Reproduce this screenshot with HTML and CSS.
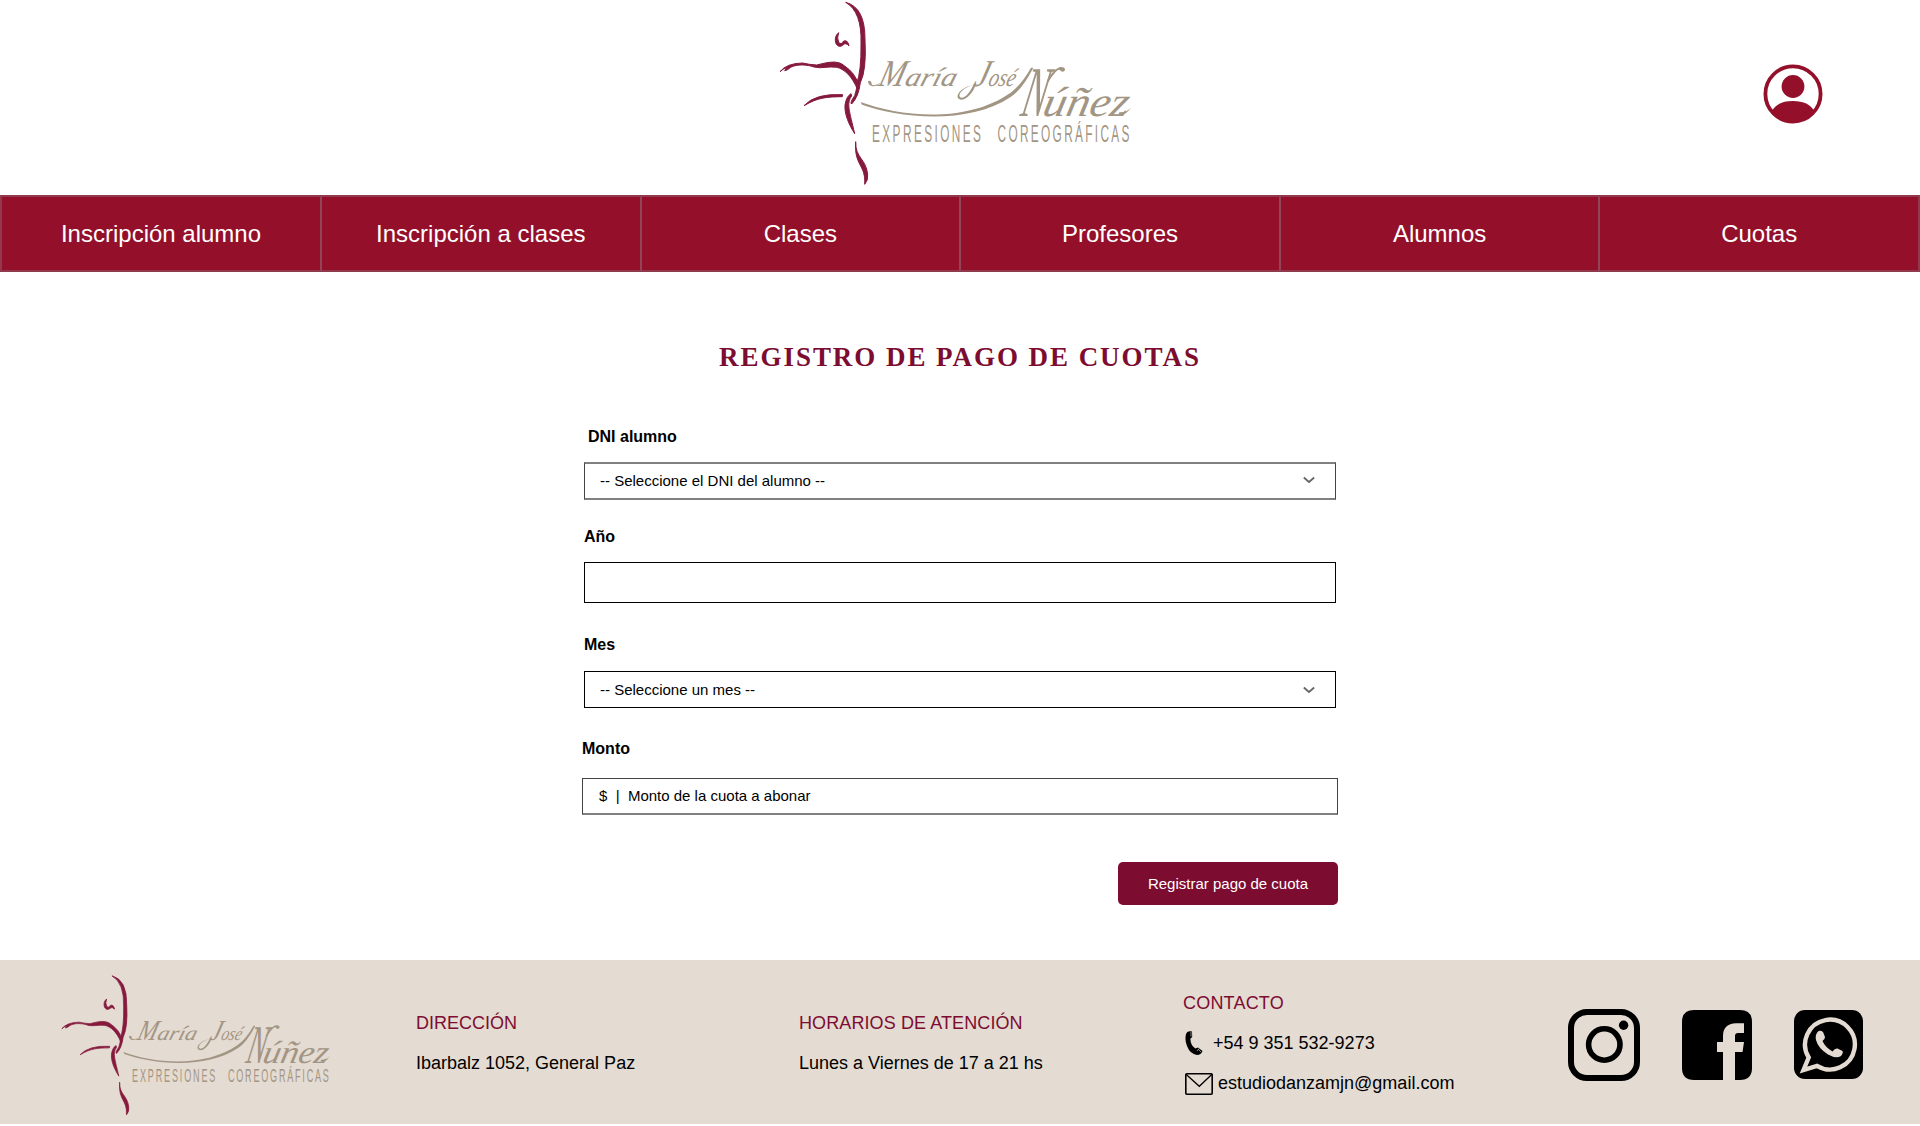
FILE: index.html
```html
<!DOCTYPE html>
<html lang="es">
<head>
<meta charset="utf-8">
<title>Registro de pago de cuotas</title>
<link rel="stylesheet" href="styles.css">
</head>
<body>
<header class="header">
  <svg class="header-logo" viewBox="0 0 1110 585">
   <g id="logo">
    <g fill="#861a3e" stroke="#861a3e" stroke-width="3" stroke-linejoin="round">
      <path d="M227 7 Q286 22 285 120 Q290 210 271 248 Q266 290 245 312 Q238 310 254 287 Q262 262 260 250 Q274 215 273 130 Q276 35 227 7Z"/>
      <path d="M206 98 Q191 110 198 131 Q207 145 219 135 Q227 126 237 138 Q234 119 221 123 Q214 136 206 127 Q200 114 206 98Z"/>
      <path d="M30 215 Q50 190 97 189 Q120 194 140 195 C170 188 202 178 224 198 Q255 219 265 252 L263 270 C247 228 221 206 200 202 C175 198 154 207 132 201 C112 194 84 191 62 202 Q53 211 44 212 L51 203 Q39 206 30 215Z"/>
      <path d="M102 317 Q137 279 218 284 L217 290 C172 291 146 291 102 317Z"/>
      <path d="M243 281 L245 288 C228 310 239 335 254 401 C237 374 223 343 225 315 Q229 289 243 281Z"/>
      <path d="M257 425 C256 475 288 475 293 523 Q295 541 284 553 C288 493 252 499 257 425Z"/>
    </g>
    <g fill="#a39583">
      <path d="M272 306 C390 350 590 371 722 278 Q755 253 783 203 L790 203 Q757 268 722 291 C593 378 380 352 276 314Z"/>
      <path d="M830 243 Q850 208 870 201 Q886 200 885 210 Q882 218 873 214 Q868 204 857 216 Q846 228 834 248Z"/>
      <g class="script">
        <text transform="translate(322 258) skewX(-16)"><tspan font-size="114" textLength="76" lengthAdjust="spacingAndGlyphs">M</tspan><tspan x="79" font-size="80" textLength="154" lengthAdjust="spacingAndGlyphs">aría</tspan></text>
        <text transform="translate(608 258) skewX(-16)"><tspan font-size="114" textLength="42" lengthAdjust="spacingAndGlyphs">J</tspan><tspan x="44" font-size="76" textLength="80" lengthAdjust="spacingAndGlyphs">osé</tspan></text>
        <text transform="translate(748 348) skewX(-12)"><tspan font-size="214" textLength="74" lengthAdjust="spacingAndGlyphs">N</tspan><tspan x="66" font-size="126" textLength="256" lengthAdjust="spacingAndGlyphs">úñez</tspan></text>
      </g>
      <path d="M294 243 Q304 240 305 250 Q302 259 325 253 L332 247 Q326 259 307 259 Q294 256 294 243Z"/>
      <path d="M610 255 C578 260 554 285 566 296 C583 308 608 283 619 250 L612 251 C600 278 582 299 570 292 C562 280 584 262 610 255Z"/>
      <path d="M1046 343 Q1065 350 1085 320 Q1072 338 1048 337Z"/>
      <g transform="translate(306 425) scale(.5 1)">
        <text class="tagline" font-size="71" textLength="654">EXPRESIONES</text>
        <text class="tagline" x="753" font-size="71" textLength="792">COREOGRÁFICAS</text>
      </g>
    </g>
   </g>
  </svg>
  <svg class="user" viewBox="0 0 60 60" role="img" aria-label="Usuario">
    <circle cx="30" cy="30" r="27.600" fill="none" stroke="#94102a" stroke-width="3.800"/>
    <circle cx="30" cy="22.500" r="11.400" fill="#94102a"/>
    <path d="M9 47 Q14 37 30 37 Q46 37 51 47 Q42 58 30 58 Q18 58 9 47Z" fill="#94102a"/>
  </svg>
</header>

<nav class="nav">
  <a>Inscripción alumno</a><a>Inscripción a clases</a><a>Clases</a><a>Profesores</a><a>Alumnos</a><a>Cuotas</a>
</nav>

<main class="main">
  <h1>REGISTRO DE PAGO DE CUOTAS</h1>
  <form class="form">
    <label class="label dni-label">DNI alumno</label>
    <div class="box dni"><span>-- Seleccione el DNI del alumno --</span>
      <svg class="chevron" viewBox="0 0 12 8"><path d="M.8 1.500 6 6 11.200 1.500"/></svg></div>
    <label class="label">Año</label>
    <div class="box year"></div>
    <label class="label">Mes</label>
    <div class="box month"><span>-- Seleccione un mes --</span>
      <svg class="chevron" viewBox="0 0 12 8"><path d="M.8 1.500 6 6 11.200 1.500"/></svg></div>
    <label class="label amount-label">Monto</label>
    <div class="box amount"><span>$&nbsp; |&nbsp; Monto de la cuota a abonar</span></div>
    <button type="button" class="submit">Registrar pago de cuota</button>
  </form>
</main>

<footer class="footer">
  <svg class="footer-logo" viewBox="0 0 1110 585"><use href="#logo"/></svg>
  <section class="info address"><h2>DIRECCIÓN</h2><p>Ibarbalz 1052, General Paz</p></section>
  <section class="info hours"><h2>HORARIOS DE ATENCIÓN</h2><p>Lunes a Viernes de 17 a 21 hs</p></section>
  <section class="info contact">
    <h2>CONTACTO</h2>
    <p class="phone"><svg viewBox="0 0 18 24"><path d="M1 3 Q2 0 5 .3 L7 .5 7.200 6 5.500 7.500 Q5 14 10.500 17.500 L13 16.500 17.500 20 Q16 24 12 24 Q5 23 2 15 Q-.5 9 1 3Z"/><path d="M6 1V5.500M13 18 16 21M12 20 14 17.500" stroke="#e4dbd2" stroke-width=".6"/></svg>+54 9 351 532-9273</p>
    <p class="mail"><svg viewBox="0 0 28 22" fill="none" stroke="#000" stroke-width="1.600"><rect x=".8" y=".8" width="26.400" height="20.400" rx="1"/><path d="M1 1.200 14.300 13.300 27 1.200" stroke-width="1.300"/></svg>estudiodanzamjn@gmail.com</p>
  </section>
  <div class="social">
    <svg viewBox="0 0 72 72" width="72" height="72" fill="none" stroke="#000"><rect x="3" y="3" width="66" height="66" rx="16" stroke-width="6"/><circle cx="36.300" cy="35.500" r="15.700" stroke-width="5.600"/><circle cx="55.600" cy="16.300" r="4.700" fill="#000" stroke="none"/></svg>
    <svg viewBox="0 0 70 70" width="70" height="70"><path d="M12 0H58Q70 0 70 12V58Q70 70 58 70H53V42H60.500L62 32H53V26Q53 23 56 23H62V13.300H54Q41 14 41 26V32H35V42H41V70H12Q0 70 0 58V12Q0 0 12 0Z"/></svg>
    <svg viewBox="0 0 69 69" width="69" height="69"><rect width="69" height="69" rx="11"/><path d="M9.500 60 14.700 47.500A24.900 24.900 0 1 1 23 55.800Z" fill="none" stroke="#e4dbd2" stroke-width="4.400"/><path d="M23.500 22Q26 19.500 29 22L31 27Q31 29.500 28.500 31Q31 37 38.500 41.500Q41 38 43.500 38.500L48.500 41Q49.500 43 47 46Q42 49 34 44.500Q24 38 22 30Q21 25 23.500 22Z" fill="#e4dbd2"/></svg>
  </div>
</footer>
</body>
</html>
```
FILE: styles.css
```css
* { box-sizing: border-box; }
body {
  margin: 0;
  background: #fff;
  color: #000;
  font-family: "Liberation Sans", Arial, sans-serif;
}
.script { font-family: "Liberation Serif", "Times New Roman", serif; font-style: italic; }
.tagline { font-family: "Liberation Sans", Arial, sans-serif; }

.header { display: flex; height: 195px; }
.header-logo { width: 370px; height: 195px; margin-left: 770px; flex: none; }
.user { width: 60px; height: 60px; margin: 64px 97.5px 0 auto; }

.nav {
  display: grid;
  grid-template-columns: 320px repeat(4, 319.6px) 1fr;
  height: 77px;
  background: #94102a;
  border: 2px solid #913a4e;
}
.nav a {
  line-height: 74px;
  text-align: center;
  color: #fff;
  font-size: 24px;
  border-right: 2px solid #90455a;
}
.nav a:last-child { border-right: 0; }

.main { height: 688px; padding-top: 68px; }
h1 {
  margin: 0;
  text-align: center;
  font: bold 27px/34px "Liberation Serif", "Times New Roman", serif;
  letter-spacing: 1.95px;
  color: #7d0c31;
}
.form { display: flex; flex-direction: column; width: 756px; margin: 53px 0 0 582px; }
.label { height: 20px; line-height: 20px; margin-left: 2px; font-size: 16px; font-weight: bold; }
.dni-label { margin-left: 6px; }
.amount-label { margin-left: 0; }
.box {
  display: flex;
  align-items: center;
  justify-content: space-between;
  width: 752px;
  height: 38px;
  margin: 15px 0 27px 2px;
  padding: 0 20px 0 15px;
  border: 1px solid #000;
  font-size: 15px;
}
.dni { border-width: 2px 1px; border-color: #808080 #444; padding-bottom: 2px; }
.year { height: 41px; margin-bottom: 32px; }
.month { height: 37px; margin: 16px 0 31px 2px; }
.amount { width: 756px; height: 37px; margin: 19px 0 0; padding: 0 0 1px 16px; border-color: #444; border-bottom: 2px solid #808080; }
.chevron { width: 12px; height: 8px; fill: none; stroke: #666; stroke-width: 1.8; }
.submit {
  align-self: flex-end;
  width: 220px;
  height: 43px;
  margin-top: 47px;
  padding: 0;
  border: 0;
  border-radius: 5px;
  background: #7d0c31;
  color: #fff;
  font: 15px "Liberation Sans", Arial, sans-serif;
}

.footer { display: flex; height: 164px; background: #e4dbd2; }
.footer-logo { width: 283px; height: 149px; margin: 14px 0 0 54px; }
.info { padding-top: 43px; }
.info h2, .info p { margin: 0; font-size: 18px; font-weight: normal; line-height: 40px; white-space: nowrap; }
.info h2 { color: #7d0c31; }
.address { width: 383px; margin-left: 79px; }
.hours { width: 384px; }
.hours h2 { letter-spacing: .1px; }
.contact { width: 385px; padding-top: 23px; }
.contact h2 { letter-spacing: .2px; }
.contact p { display: flex; align-items: center; }
.phone svg { width: 18px; height: 24px; margin: 0 10px 0 2px; }
.mail svg { width: 28px; height: 22px; margin: 2px 5px 0 2px; }
.social { display: flex; align-items: center; gap: 42px; height: 169px; }
```
